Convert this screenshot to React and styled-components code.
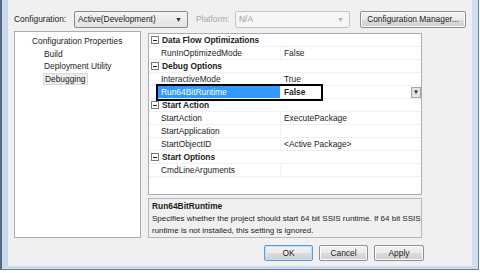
import React from 'react';
import styled, { createGlobalStyle } from 'styled-components';

const GlobalStyle = createGlobalStyle`
body {
  margin: 0;
  background: #ffffff;
  font-family: "Liberation Sans", Arial, sans-serif;
  font-size: 8.4px;
  color: #1c1c1c;
}
`

const Frame = styled.div`
width: 479px;
border-left: 2px solid #56687c;
border-right: 1px solid #6d7f92;
border-bottom: 1px solid #6d7f92;
box-sizing: border-box;
`

const Chrome = styled.div`
border-left: 6px solid #c7d9ec;
border-right: 6px solid #cddff0;
border-bottom: 3px solid #c9dbee;
`

const Dialog = styled.div`
height: 266px;
background: #f0f0f0;
padding: 10px 0 0 6px;
box-sizing: border-box;
display: flex;
flex-direction: column;
`

const TopBar = styled.div`
display: flex;
align-items: center;
height: 18px;
`

const Label = styled.span`
width: ${p => p.w}px;
color: ${p => (p.disabled ? '#a9a9a9' : '#1c1c1c')};
white-space: nowrap;
`

const Combo = styled.div`
width: ${p => p.w}px;
height: 17px;
box-sizing: border-box;
border: 1px solid ${p => (p.disabled ? '#c2c5c8' : '#8a8a8a')};
border-radius: 2px;
background: ${p => (p.disabled ? '#f6f6f6' : 'linear-gradient(#f4f4f4, #e3e3e3)')};
color: ${p => (p.disabled ? '#9a9a9a' : '#1c1c1c')};
display: flex;
align-items: center;
justify-content: space-between;
padding: 0 5px 0 3px;
margin-right: ${p => p.mr || 0}px;
`

const Caret = styled.span`
font-size: 7px;
color: ${p => (p.disabled ? '#b0b0b0' : '#333')};
`

const Button = styled.div`
width: ${p => p.w}px;
height: ${p => p.h || 16}px;
box-sizing: border-box;
border: 1px solid ${p => (p.primary ? '#5e9bd0' : '#8e8f8f')};
box-shadow: ${p => (p.primary ? 'inset 0 0 0 1px #bfe0f7' : 'inset 0 0 0 1px #fbfbfb')};
border-radius: 2px;
background: linear-gradient(#f2f2f2 0%, #ebebeb 50%, #dddddd 51%, #cfcfcf 100%);
display: flex;
align-items: center;
justify-content: center;
white-space: nowrap;
`

const Main = styled.div`
display: flex;
gap: 7px;
margin-top: 3px;
`

const Tree = styled.div`
width: 127px;
height: 207px;
box-sizing: border-box;
background: #ffffff;
border: 1px solid #a9acb1;
padding-top: 3px;
`

const TreeItem = styled.div`
height: 12.5px;
line-height: 12.5px;
padding-left: ${p => (p.child ? 29 : 17)}px;
`

const TreeText = styled.span`
padding: 0 1px;
background: ${p => (p.selected ? '#eeeeee' : 'transparent')};
outline: ${p => (p.selected ? '1px solid #dadada' : 'none')};
`

const Column = styled.div`
width: 274px;
padding-top: 2px;
display: flex;
flex-direction: column;
gap: 3px;
`

const Grid = styled.div`
position: relative;
height: 162px;
box-sizing: border-box;
background: #ffffff;
border: 1px solid #a9acb1;
`

const Row = styled.div`
display: grid;
grid-template-columns: 7px 124px 1fr;
height: 13px;
line-height: 12px;
border-bottom: 1px solid #edf0f5;
box-sizing: border-box;
`

const Gutter = styled.div`
display: flex;
align-items: center;
justify-content: flex-start;
padding-left: 2px;
`

const Toggle = styled.span`
position: relative;
flex: none;
width: 6px;
height: 6px;
border: 1px solid #7a7a7a;
background: #fff;
&::after {
  content: '';
  position: absolute;
  left: 1px;
  top: 2.5px;
  width: 4px;
  height: 1px;
  background: #222;
}
`

const Category = styled.div`
grid-column: 2 / 4;
font-weight: bold;
padding-left: 6px;
`

const Name = styled.div`
padding-left: 5px;
background: ${p => (p.selected ? '#3399ff' : 'transparent')};
color: ${p => (p.selected ? '#ffffff' : '#1c1c1c')};
white-space: nowrap;
`

const Value = styled.div`
display: flex;
align-items: center;
justify-content: space-between;
padding-left: 3px;
font-weight: ${p => (p.bold ? 'bold' : 'normal')};
border-left: 1px solid #f1f3f6;
white-space: nowrap;
`

const DropButton = styled.span`
width: 10px;
height: 11px;
box-sizing: border-box;
border: 1px solid #a6a6a6;
background: #e4e4e4;
font-size: 6px;
display: flex;
align-items: center;
justify-content: center;
color: #222;
`

const Highlight = styled.div`
position: absolute;
left: 7px;
top: 50px;
width: 167px;
height: 17px;
box-sizing: border-box;
border: 2px solid #000000;
pointer-events: none;
`

const Description = styled.div`
height: 40px;
box-sizing: border-box;
border: 1px solid #b4b7bb;
background: #f0f0f0;
padding: 1px 3px;
line-height: 12px;
font-size: 8px;
white-space: nowrap;
`

const DescTitle = styled.div`
font-weight: bold;
font-size: 8.4px;
margin-bottom: 1px;
`

const Footer = styled.div`
display: flex;
justify-content: flex-end;
gap: 6px;
margin-top: 7px;
padding-right: 48px;
`

const rows = [
  { cat: 'Data Flow Optimizations' },
  { name: 'RunInOptimizedMode', value: 'False' },
  { cat: 'Debug Options' },
  { name: 'InteractiveMode', value: 'True' },
  { name: 'Run64BitRuntime', value: 'False', selected: true },
  { cat: 'Start Action' },
  { name: 'StartAction', value: 'ExecutePackage' },
  { name: 'StartApplication', value: '' },
  { name: 'StartObjectID', value: '<Active Package>' },
  { cat: 'Start Options' },
  { name: 'CmdLineArguments', value: '' },
];

function App() {
  return (
    <>
      <GlobalStyle />
      <Frame>
        <Chrome>
          <Dialog>
            <TopBar>
              <Label w={60}>Configuration:</Label>
              <Combo w={114} mr={8}>
                <span>Active(Development)</span>
                <Caret>▼</Caret>
              </Combo>
              <Label w={39} disabled>Platform:</Label>
              <Combo w={115} mr={10} disabled>
                <span>N/A</span>
                <Caret disabled>▼</Caret>
              </Combo>
              <Button w={106} h={17}>Configuration Manager...</Button>
            </TopBar>

            <Main>
              <Tree>
                <TreeItem>Configuration Properties</TreeItem>
                <TreeItem child>Build</TreeItem>
                <TreeItem child>Deployment Utility</TreeItem>
                <TreeItem child><TreeText selected>Debugging</TreeText></TreeItem>
              </Tree>

              <Column>
                <Grid>
                  {rows.map((r, i) =>
                    r.cat ? (
                      <Row key={i}>
                        <Gutter><Toggle /></Gutter>
                        <Category>{r.cat}</Category>
                      </Row>
                    ) : (
                      <Row key={i}>
                        <Gutter />
                        <Name selected={r.selected}>{r.name}</Name>
                        <Value bold={r.selected}>
                          <span>{r.value}</span>
                          {r.selected && <DropButton>▼</DropButton>}
                        </Value>
                      </Row>
                    )
                  )}
                  <Highlight />
                </Grid>
                <Description>
                  <DescTitle>Run64BitRuntime</DescTitle>
                  <div>Specifies whether the project should start 64 bit SSIS runtime. If 64 bit SSIS</div>
                  <div>runtime is not installed, this setting is ignored.</div>
                </Description>
              </Column>
            </Main>

            <Footer>
              <Button w={49} primary>OK</Button>
              <Button w={49}>Cancel</Button>
              <Button w={50}>Apply</Button>
            </Footer>
          </Dialog>
        </Chrome>
      </Frame>
    </>
  );
}

export default App;
